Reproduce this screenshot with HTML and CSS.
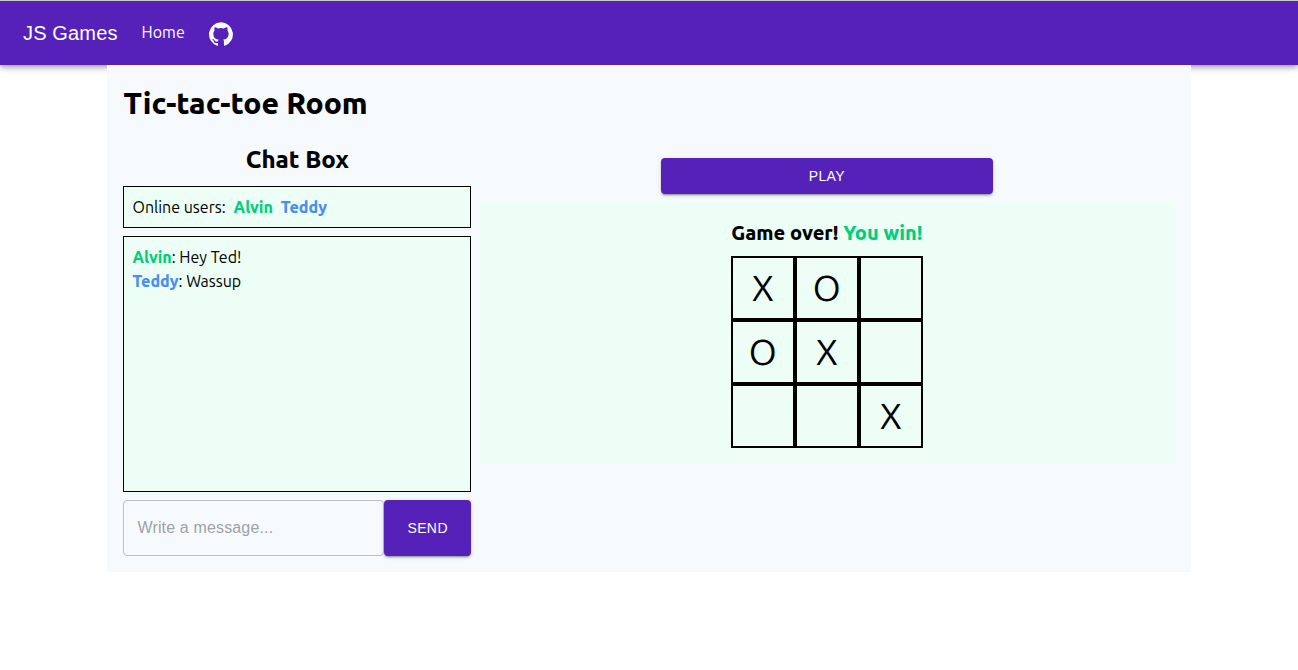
FILE: index.html
```html
<!DOCTYPE html>
<html lang="en">
<head>
<meta charset="utf-8">
<meta name="viewport" content="width=device-width, initial-scale=1">
<title>JS Games</title>
<link rel="stylesheet" href="styles.css">
</head>
<body>
<header class="navbar">
  <a class="brand" href="#">JS Games</a>
  <nav class="nav">
    <a class="nav-link" href="#">Home</a>
    <a class="nav-icon" href="#" aria-label="GitHub">
      <svg viewBox="0 0 24 24" width="24" height="24" fill="currentColor" aria-hidden="true"><path d="M12 .3a12 12 0 0 0-3.8 23.38c.6.12.83-.26.83-.57L9 21.07c-3.34.72-4.04-1.61-4.04-1.61-.55-1.39-1.34-1.76-1.34-1.76-1.08-.74.09-.73.09-.73 1.2.09 1.83 1.24 1.83 1.24 1.08 1.83 2.81 1.3 3.5 1 .1-.78.42-1.31.76-1.61-2.67-.3-5.47-1.33-5.47-5.93 0-1.31.47-2.38 1.24-3.22-.14-.3-.54-1.52.1-3.18 0 0 1-.32 3.3 1.23a11.5 11.5 0 0 1 6 0c2.28-1.55 3.29-1.23 3.29-1.23.64 1.66.24 2.88.12 3.18a4.65 4.65 0 0 1 1.23 3.22c0 4.61-2.8 5.63-5.48 5.92.42.36.81 1.1.81 2.22l-.01 3.29c0 .31.2.69.82.57A12 12 0 0 0 12 .3"/></svg>
    </a>
  </nav>
</header>
<main class="room">
  <h1 class="room-title">Tic-tac-toe Room</h1>
  <div class="columns">
    <section class="chat">
      <h2 class="chat-title">Chat Box</h2>
      <div class="panel users">
        <span>Online users:</span>
        <span class="name green">Alvin</span>
        <span class="name blue">Teddy</span>
      </div>
      <div class="panel messages">
        <div><span class="name green">Alvin</span>: Hey Ted!</div>
        <div><span class="name blue">Teddy</span>: Wassup</div>
      </div>
      <form class="composer">
        <input class="message-input" type="text" placeholder="Write a message..." aria-label="Message">
        <button class="button send" type="button">SEND</button>
      </form>
    </section>
    <section class="game">
      <button class="button play" type="button">PLAY</button>
      <div class="game-panel">
        <h3 class="status">Game over! <span class="green">You win!</span></h3>
        <div class="board">
          <button class="cell" type="button">X</button>
          <button class="cell" type="button">O</button>
          <button class="cell" type="button" aria-label="Empty"></button>
          <button class="cell" type="button">O</button>
          <button class="cell" type="button">X</button>
          <button class="cell" type="button" aria-label="Empty"></button>
          <button class="cell" type="button" aria-label="Empty"></button>
          <button class="cell" type="button" aria-label="Empty"></button>
          <button class="cell" type="button">X</button>
        </div>
      </div>
    </section>
  </div>
</main>
</body>
</html>
```
FILE: styles.css
```css
* {
  box-sizing: border-box;
}

body {
  margin: 0;
  background: #fff;
  color: #000;
  font-family: Ubuntu, "Noto Sans", sans-serif;
  font-size: 16px;
  line-height: 24px;
}

h1, h2, h3 {
  margin: 0;
  font-weight: 800;
}

.navbar {
  display: flex;
  align-items: center;
  gap: 24px;
  min-height: 65px;
  padding: 0 23px;
  border-top: 1px solid #c8c8c8;
  background: #5521b9;
  box-shadow: 0 2px 4px -1px rgba(0, 0, 0, .2), 0 4px 5px rgba(0, 0, 0, .14), 0 1px 10px rgba(0, 0, 0, .12);
}

.navbar a {
  color: #fff;
  text-decoration: none;
}

.brand {
  font-family: "Liberation Sans", Arial, sans-serif;
  font-size: 20px;
  letter-spacing: 0.15px;
}

.nav {
  display: flex;
  align-items: flex-end;
  gap: 24px;
}

.nav-link {
  padding-bottom: 2px;
}

.nav-icon {
  display: flex;
}

.room {
  position: relative;
  width: 83.44%;
  margin: 0 auto;
  padding: 16px;
  background: #f6fafd;
}

.room-title {
  margin-bottom: 16px;
  font-size: 30px;
  line-height: 45px;
}

.columns {
  display: grid;
  grid-template-columns: 1fr 2fr;
  gap: 8px;
  align-items: start;
}

.chat {
  display: flex;
  flex-direction: column;
  gap: 8px;
}

.chat-title {
  font-size: 24px;
  line-height: 36px;
  text-align: center;
}

.panel {
  padding: 8px;
  border: 1px solid #000;
  background: #ecfef5;
}

.users {
  display: flex;
  gap: 8px;
}

.messages {
  height: 256px;
  overflow-y: auto;
}

.name {
  font-weight: 800;
}

.green {
  color: #00ce7c;
}

.blue {
  color: #4a8fe9;
}

.composer {
  display: flex;
}

.message-input {
  flex: 1;
  min-width: 0;
  height: 56px;
  padding: 0 13px;
  border: 1px solid #bdc0c3;
  border-radius: 4px;
  background: transparent;
  font-family: "Liberation Sans", Arial, sans-serif;
  font-size: 16px;
  letter-spacing: 0.15px;
}

.message-input::placeholder {
  color: #9fa2a4;
}

.button {
  border: 0;
  border-radius: 4px;
  background: #5521b9;
  color: #fff;
  font-family: "Liberation Sans", Arial, sans-serif;
  font-size: 14px;
  letter-spacing: 0.4px;
  box-shadow: 0 3px 1px -2px rgba(0, 0, 0, .2), 0 2px 2px rgba(0, 0, 0, .14), 0 1px 5px rgba(0, 0, 0, .12);
}

.send {
  width: 87px;
}

.game {
  display: flex;
  flex-direction: column;
  align-items: center;
  gap: 8px;
  padding-top: 16px;
}

.play {
  width: calc(50% - 16px);
  height: 36px;
}

.game-panel {
  display: flex;
  flex-direction: column;
  align-items: center;
  gap: 8px;
  width: 100%;
  padding: 16px;
  background: #ecfef5;
}

.status {
  font-size: 20px;
  line-height: 30px;
}

.board {
  display: grid;
  grid-template-columns: repeat(3, 64px);
  grid-auto-rows: 64px;
}

.cell {
  padding: 0;
  border: 2px solid #000;
  background: transparent;
  color: #000;
  font-family: inherit;
  font-size: 36px;
  line-height: 54px;
}
```
